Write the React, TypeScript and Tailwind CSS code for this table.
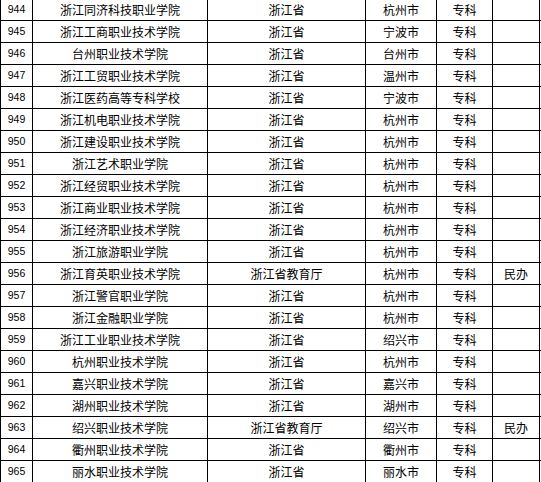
const rows: [string, string, string, string, string, string][] = [
  ['944', '浙江同济科技职业学院', '浙江省', '杭州市', '专科', ''],
  ['945', '浙江工商职业技术学院', '浙江省', '宁波市', '专科', ''],
  ['946', '台州职业技术学院', '浙江省', '台州市', '专科', ''],
  ['947', '浙江工贸职业技术学院', '浙江省', '温州市', '专科', ''],
  ['948', '浙江医药高等专科学校', '浙江省', '宁波市', '专科', ''],
  ['949', '浙江机电职业技术学院', '浙江省', '杭州市', '专科', ''],
  ['950', '浙江建设职业技术学院', '浙江省', '杭州市', '专科', ''],
  ['951', '浙江艺术职业学院', '浙江省', '杭州市', '专科', ''],
  ['952', '浙江经贸职业技术学院', '浙江省', '杭州市', '专科', ''],
  ['953', '浙江商业职业技术学院', '浙江省', '杭州市', '专科', ''],
  ['954', '浙江经济职业技术学院', '浙江省', '杭州市', '专科', ''],
  ['955', '浙江旅游职业学院', '浙江省', '杭州市', '专科', ''],
  ['956', '浙江育英职业技术学院', '浙江省教育厅', '杭州市', '专科', '民办'],
  ['957', '浙江警官职业学院', '浙江省', '杭州市', '专科', ''],
  ['958', '浙江金融职业学院', '浙江省', '杭州市', '专科', ''],
  ['959', '浙江工业职业技术学院', '浙江省', '绍兴市', '专科', ''],
  ['960', '杭州职业技术学院', '浙江省', '杭州市', '专科', ''],
  ['961', '嘉兴职业技术学院', '浙江省', '嘉兴市', '专科', ''],
  ['962', '湖州职业技术学院', '浙江省', '湖州市', '专科', ''],
  ['963', '绍兴职业技术学院', '浙江省教育厅', '绍兴市', '专科', '民办'],
  ['964', '衢州职业技术学院', '浙江省', '衢州市', '专科', ''],
  ['965', '丽水职业技术学院', '浙江省', '丽水市', '专科', ''],
]

const cell = 'flex items-center justify-center border-r border-black h-full'

export default function App() {
  return (
    <div className="w-[541px] h-[482px] overflow-hidden bg-white text-black">
      <div className="-mt-px font-['Noto_Sans_CJK_SC',sans-serif] text-[12px] leading-none">
        {rows.map(([no, name, dept, city, level, note]) => (
          <div key={no} className="flex h-[22px] border-b border-black">
            <div className={`${cell} w-[33px] border-l font-['Liberation_Sans',sans-serif] text-[10.5px]`}>{no}</div>
            <div className={`${cell} w-[175px]`}>{name}</div>
            <div className={`${cell} w-[158px]`}>{dept}</div>
            <div className={`${cell} w-[71px]`}>{city}</div>
            <div className={`${cell} w-[56px]`}>{level}</div>
            <div className={`${cell} w-[47px]`}>{note}</div>
          </div>
        ))}
      </div>
    </div>
  )
}
